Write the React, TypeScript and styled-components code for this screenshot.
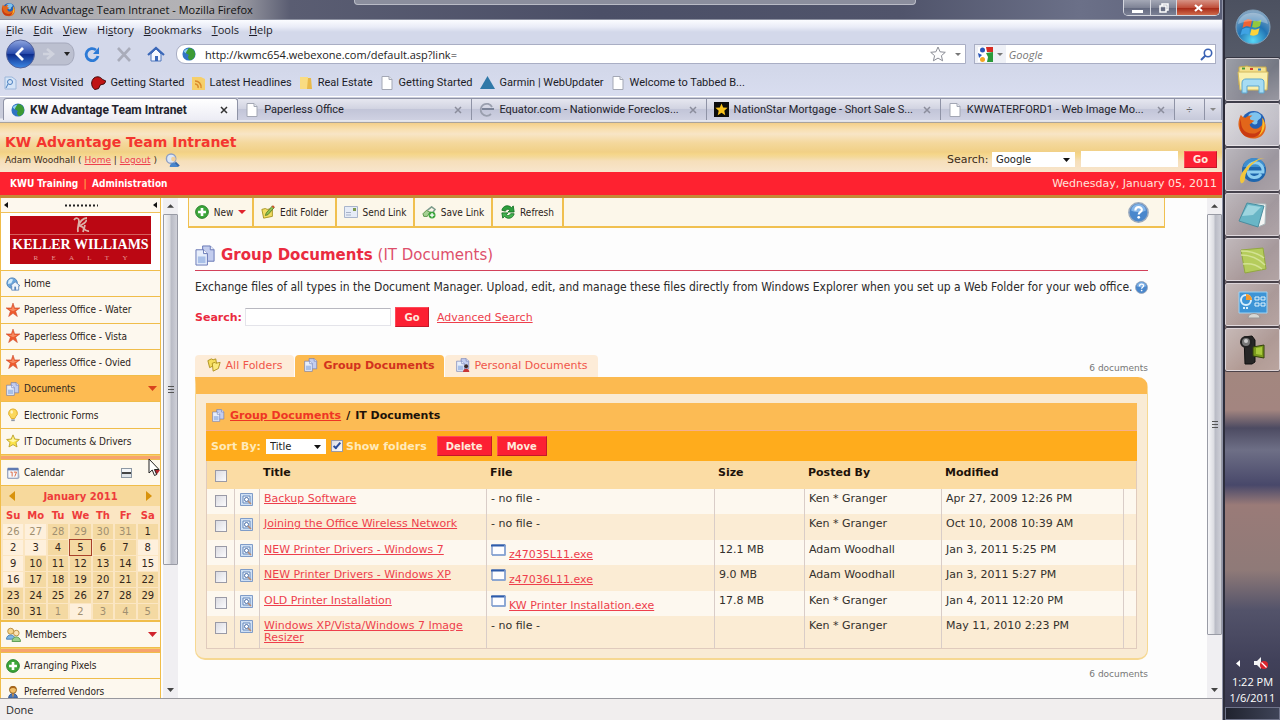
import React from "react";
import styled, { createGlobalStyle, css } from "styled-components";

const verdana = `"DejaVu Sans", Verdana, sans-serif`;
const condensed = `"DejaVu Sans Condensed", "DejaVu Sans", Tahoma, sans-serif`;
const segoe = `Roboto, "Segoe UI", sans-serif`;

const Global = createGlobalStyle`
  *, *::before, *::after { box-sizing: border-box; }
  body { margin: 0; background: #4b4c5f; font-family: ${verdana}; font-size: 11px; color: #222; }
  button, input, select { font-family: inherit; font-size: inherit; margin: 0; padding: 0; border: 0; }
  button { background: none; color: inherit; }
  a { color: #ee3f4c; }
  svg { display: block; flex: none; }
  ul { list-style: none; margin: 0; padding: 0; }
  h1, h2, p { margin: 0; }
`;

/* ---------- desktop ---------- */
const Desktop = styled.div`
  display: grid;
  grid-template-columns: minmax(0, 1fr) 57px;
  height: 100vh;
  overflow: hidden;
`;
const BrowserWindow = styled.div`
  display: flex;
  flex-direction: column;
  min-height: 0;
  border-right: 1px solid #8f93a6;
`;

/* ---------- title bar ---------- */
const TitleBar = styled.header`
  position: relative;
  display: flex;
  align-items: center;
  height: 20px;
  flex: none;
  padding-left: 1px;
  gap: 4px;
  border-bottom: 1px solid #8c90a0;
  background: linear-gradient(90deg, #a9a9ae 0, #b4b3b6 200px, #8d8e99 250px, #5a5d72 290px, #4b4f67 600px, #50546b 900px, #6b7088 1080px, #5c6078 100%);
  color: #111;
  font-family: "Open Sans", sans-serif;
  font-size: 11px;
`;
const BackgroundEdge = styled.div`
  position: absolute;
  top: 0;
  left: 29%;
  width: 46%;
  height: 5px;
  background: #8b8e9d;
  border: 1px solid #b9bbc6;
  border-top: 0;
  border-radius: 0 0 4px 4px;
`;
const WindowButtons = styled.div`
  display: flex;
  align-self: flex-start;
  margin-left: auto;
  margin-right: 2px;
  height: 16px;
  border: 1px solid #d4d6de;
  border-top: 0;
  border-radius: 0 0 5px 5px;
  overflow: hidden;
`;
const WindowButton = styled.button<{ $close?: boolean }>`
  display: grid;
  place-items: center;
  width: ${(p) => (p.$close ? 43 : 26)}px;
  background: ${(p) =>
    p.$close
      ? "linear-gradient(#d79385, #c0503c 50%, #a82a18 55%, #cf6a4b)"
      : "linear-gradient(#a4a8b6, #7f8496 50%, #646a80 55%, #7c8195)"};
  & + & { border-left: 1px solid #d4d6de; }
`;

/* ---------- browser chrome ---------- */
const Chrome = styled.div`
  flex: none;
  font-family: ${segoe};
  color: #1c1c28;
  background: linear-gradient(#fbfcff 0, #e9ecf7 7px, #d3d8ea 12px, #d3d8ea 50px, #dde1f4 100%);
`;
const MenuBar = styled.nav`
  display: flex;
  align-items: center;
  height: 19px;
  padding-left: 6px;
  gap: 10px;
  font-family: "Open Sans", sans-serif;
`;
const MenuItem = styled.button``;
const NavBar = styled.div`
  display: flex;
  align-items: center;
  height: 30px;
  padding: 0 6px 0 5px;
`;
const NavButton = styled.button`
  display: grid;
  place-items: center;
  width: 32px;
  height: 28px;
`;
const Field = styled.div<{ $grow?: boolean }>`
  display: flex;
  align-items: center;
  height: 20px;
  background: #fff;
  border: 1px solid #a9aec4;
  ${(p) =>
    p.$grow
      ? css`flex: 1; border-radius: 9px 0 0 9px; padding: 0 4px 0 5px; margin-left: 4px; gap: 9px;`
      : css`width: 20%; margin-left: 8px; padding-right: 2px;`}
`;
const FieldInput = styled.input`
  flex: 1;
  min-width: 0;
  background: transparent;
  outline: none;
  color: #222;
  font-family: "Open Sans", sans-serif;
  &::placeholder { color: #777; font-style: italic; opacity: 1; }
`;
const EngineButton = styled.button`
  display: flex;
  align-items: center;
  gap: 4px;
  height: 18px;
  width: 31px;
  margin-right: 3px;
  padding-left: 3px;
  background: #eef0f6;
`;
const BookmarkBar = styled.nav`
  display: flex;
  align-items: center;
  height: 27px;
  padding-left: 4px;
  gap: 7px;
`;
const Bookmark = styled.a`
  display: flex;
  align-items: center;
  gap: 5px;
  color: #1c1c28;
  text-decoration: none;
  white-space: nowrap;
`;
const TabStrip = styled.div`
  display: flex;
  align-items: stretch;
  height: 26px;
  padding: 2px 0 2px 3px;
  background: linear-gradient(#fff 0, #fff 1px, #c9ccdb 1px, #c9ccdb 22px, #f0f1f6 23px, #dcdee6 100%);
`;
const Tab = styled.div<{ $active?: boolean }>`
  display: flex;
  align-items: center;
  flex: 1;
  min-width: 0;
  gap: 5px;
  padding: 0 9px 0 7px;
  border: 1px solid #8f93a6;
  border-width: 1px 1px 0 0;
  background: ${(p) =>
    p.$active ? "linear-gradient(#fff, #ececf4)" : "linear-gradient(#e6e7f0, #d2d4e2 45%, #c2c5d8 50%, #cfd1e2)"};
  ${(p) => p.$active && "font-size: 12px; font-weight: 700; border-left-width: 1px; border-radius: 4px 3px 0 0;"}
  color: #23232c;
`;
const TabLabel = styled.span`
  flex: 1;
  white-space: nowrap;
`;
const TabTool = styled.button<{ $narrow?: boolean }>`
  display: grid;
  place-items: center;
  width: ${(p) => (p.$narrow ? 17 : 30)}px;
  border: 1px solid #8f93a6;
  border-width: 1px 1px 0 0;
  background: linear-gradient(#e6e7f0, #c6c9da);
  color: #666;
`;

/* ---------- site header ---------- */
const SiteHeader = styled.header`
  display: flex;
  justify-content: space-between;
  flex: none;
  height: 50px;
  padding: 0 5px 0 5px;
  border-top: 1px solid #a9a39c;
  background: linear-gradient(#f4cf88 0, #f8dfae 6px, #f8e5c6 11px, #f4d89c 20px, #f1d086 29px, #f5d689 31px, #f4d99a 34px, #f6dfba 38px, #f8e5cc 100%);
`;
const Identity = styled.div`
  padding-top: 9px;
`;
const SiteTitle = styled.h1`
  font: 700 14px/20px ${verdana};
  color: #f4362f;
`;
const UserLine = styled.div`
  display: flex;
  align-items: center;
  gap: 8px;
  font: 9px/16px ${verdana};
  color: #3d2c18;
`;
const SiteSearch = styled.form`
  display: flex;
  align-items: center;
  align-self: flex-end;
  height: 18px;
  margin-bottom: 4px;
  color: #3d2c18;
`;
const SelectBox = styled.span<{ $width: number }>`
  position: relative;
  display: inline-block;
  width: ${(p) => p.$width}px;
  height: 15px;
  background: #fff;
  color: #222;
  svg { position: absolute; right: 5px; top: 6px; pointer-events: none; }
`;
const Select = styled.select`
  appearance: none;
  display: block;
  width: 100%;
  height: 15px;
  padding-left: 4px;
  background: transparent;
  font: 10px ${verdana};
  color: #222;
`;
const SearchText = styled.input<{ $bordered?: boolean }>`
  width: ${(p) => (p.$bordered ? 146 : 97)}px;
  height: ${(p) => (p.$bordered ? 18 : 16)}px;
  margin: ${(p) => (p.$bordered ? "0 4px 0 0" : "0 6px")};
  background: #fff;
  border: 1px solid ${(p) => (p.$bordered ? "#e4e4ea" : "#fff")};
  ${(p) => p.$bordered && "border-top-color: #b8b8c0;"}
`;
const RedButton = styled.button<{ $width: number; $tall?: boolean }>`
  width: ${(p) => p.$width}px;
  height: ${(p) => (p.$tall ? 20 : 17)}px;
  background: #fc2033;
  border: 1px solid #fd4a58;
  border-right-color: #c4182a;
  border-bottom-color: #c4182a;
  color: #ffe9dc;
  font: 700 10px ${verdana};
`;
const RedBar = styled.nav`
  display: flex;
  align-items: center;
  gap: 5px;
  flex: none;
  height: 26px;
  padding: 0 5px 1px 10px;
  background: #fe2230;
  border-bottom: 3px solid #c58a36;
  color: #ffb04a;
`;
const RedBarLink = styled.a`
  color: #fff;
  font: 700 10px ${condensed};
  text-decoration: none;
`;
const Today = styled.span`
  margin-left: auto;
  color: #ffe4dc;
`;

/* ---------- page body ---------- */
const Body = styled.div`
  display: flex;
  flex: 1;
  min-height: 0;
  background: #fdfdfd;
`;
const Sidebar = styled.aside`
  position: relative;
  width: 161px;
  margin-right: 2px;
  flex: none;
  overflow: hidden;
  border: 1px solid #f0bd4a;
  border-width: 0 1px;
  background: #fdf8ee;
  font: 10px ${condensed};
`;
const Collapse = styled.div`
  display: flex;
  align-items: center;
  justify-content: space-between;
  height: 15px;
  padding: 0 3px;
  border-bottom: 1px solid #f0c05a;
`;
const LogoArea = styled.div`
  height: 58px;
  padding: 3px 9px;
  background: #fff;
  border-bottom: 1px solid #f0bd4a;
`;
const Logo = styled.div`
  display: flex;
  flex-direction: column;
  align-items: center;
  height: 48px;
  background: #bb0713;
  color: #fff;
`;
const LogoMark = styled.div`
  display: flex;
  justify-content: center;
  width: 100%;
  height: 19px;
  border-bottom: 1px solid #d5625f;
`;
const LogoName = styled.div`
  font: 700 14px/20px "Liberation Serif", serif;
  white-space: nowrap;
`;
const LogoSub = styled.div`
  display: flex;
  justify-content: space-between;
  width: 94px;
  font: 7px/7px "Liberation Serif", serif;
  color: #e79a94;
`;
const SideList = styled.ul`
  display: flex;
  flex-direction: column;
  height: 184px;
`;
const SideItem = styled.li<{ $selected?: boolean }>`
  flex: 1;
  display: flex;
  align-items: center;
  padding: 0 3px 0 5px;
  border-bottom: 1px solid #f0bd4a;
  background: ${(p) => (p.$selected ? "#fdbb52" : "#fdf8ee")};
`;
const SideLink = styled.a`
  display: flex;
  align-items: center;
  gap: 4px;
  flex: 1;
  min-width: 0;
  color: #2c2420;
  text-decoration: none;
  white-space: nowrap;
`;
const Divider = styled.div`
  height: 5px;
  background: linear-gradient(#f6cf6a 1px, #f7a36d 1px);
  border-bottom: 1px solid #f0bd4a;
`;
const SideHeading = styled.div`
  position: relative;
  display: flex;
  align-items: center;
  height: 26px;
  padding: 0 3px 0 5px;
  border-bottom: 1px solid #f0bd4a;
`;
const MinusBox = styled.button`
  width: 11px;
  height: 10px;
  margin-right: 25px;
  border: 1px solid #8d98a4;
  background: linear-gradient(#f4f6f8 3px, #444 3px, #444 5px, #dfe4e8 5px);
`;
const Pointer = styled.div`
  position: absolute;
  right: 0;
  top: -2px;
`;
const Month = styled.div`
  display: flex;
  align-items: center;
  justify-content: space-between;
  height: 20px;
  padding: 0 8px;
  background: #f7d99c;
  color: #ee3b3b;
  font: 700 10px ${verdana};
`;
const CalendarTable = styled.table`
  width: 100%;
  table-layout: fixed;
  border-collapse: separate;
  border-spacing: 2px 1px;
  background: #fbe6c3;
  text-align: center;
  font: 10px ${verdana};
  border-bottom: 2px solid #f0bd4a;
  th { padding: 0; height: 16px; color: #ee3b3b; font-size: 10px; }
`;
const Day = styled.td<{ $light?: boolean; $muted?: boolean; $today?: boolean }>`
  padding: 0;
  height: 15px;
  background: ${(p) => (p.$light ? "#fef0dc" : "#f4d9a2")};
  color: ${(p) => (p.$muted ? "#a08f70" : "#33261a")};
  outline: ${(p) => (p.$today ? "1px solid #a8402a" : "none")};
`;

const ScrollTrack = styled.div`
  display: flex;
  flex-direction: column;
  width: 15px;
  flex: none;
  background: #f0eff2;
`;
const ScrollArrow = styled.button`
  display: grid;
  place-items: center;
  height: 16px;
  flex: none;
`;
const ScrollRun = styled.div`
  flex: 1;
  min-height: 0;
`;
const ScrollThumb = styled.div<{ $size: number }>`
  display: grid;
  place-items: center;
  height: ${(p) => p.$size}%;
  border: 1px solid #999ba5;
  border-radius: 1px;
  background: linear-gradient(90deg, #f6f6f8, #dcdde2 45%, #b9bbc5 55%, #cfd0d8);
`;

const Main = styled.main`
  flex: 1;
  min-width: 0;
  padding: 0 42px 0 10px;
`;
const Toolbar = styled.div`
  display: flex;
  height: 30px;
  background: #fcf7ea;
  border: 1px solid #f0c050;
  border-top: 0;
  border-bottom-width: 2px;
  font: 10px ${condensed};
`;
const ToolButton = styled.button<{ $width: number }>`
  display: flex;
  align-items: center;
  justify-content: center;
  gap: 5px;
  width: ${(p) => p.$width}px;
  border-right: 2px solid #f0c050;
  color: #2c2420;
  white-space: nowrap;
`;
const HelpButton = styled.button`
  margin-left: auto;
  margin-right: 15px;
`;
const Content = styled.div`
  padding: 14px 17px 0 7px;
`;
const PageTitle = styled.h2`
  display: flex;
  align-items: center;
  gap: 5px;
  height: 29px;
  padding-bottom: 2px;
  border-bottom: 1px solid #d3415a;
  font: 700 15px ${verdana};
  color: #ea2b40;
  span { font-weight: 400; color: #dd4f6b; }
`;
const Intro = styled.p`
  display: flex;
  align-items: center;
  justify-content: space-between;
  height: 32px;
  font: 12px ${condensed};
  color: #2a2a2a;
  white-space: nowrap;
`;
const DocSearch = styled.form`
  display: flex;
  align-items: center;
  height: 22px;
  margin-top: 3px;
  label { color: #ea2b40; font-weight: 700; width: 50px; }
  a { margin-left: 8px; }
`;
const TabRow = styled.div`
  display: flex;
  align-items: flex-end;
  gap: 1px;
  margin-top: 27px;
`;
const DocTab = styled.a<{ $active?: boolean; $width: number }>`
  display: flex;
  align-items: center;
  justify-content: center;
  gap: 5px;
  width: ${(p) => p.$width}px;
  height: 22px;
  padding-bottom: 2px;
  border-radius: 4px 4px 0 0;
  background: ${(p) => (p.$active ? "#fcba50" : "#fdecd8")};
  color: ${(p) => (p.$active ? "#d2321e" : "#f0564a")};
  font-weight: ${(p) => (p.$active ? 700 : 400)};
  text-decoration: none;
`;
const Count = styled.span`
  margin-left: auto;
  padding-bottom: 4px;
  font-size: 9px;
  color: #777;
`;
const CountBelow = styled.div`
  margin-top: 9px;
  text-align: right;
  font-size: 9px;
  color: #777;
`;
const Panel = styled.section`
  border: 1px solid #f6d892;
  border-top: 17px solid #fcba50;
  border-bottom: 2px solid #f6d892;
  border-radius: 0 10px 10px 10px;
  padding: 9px 10px;
  background: #f9ebd5;
`;
const Crumbs = styled.nav`
  display: flex;
  align-items: center;
  gap: 5px;
  height: 27px;
  padding: 0 0 2px 6px;
  background: #fcbb54;
  font-weight: 700;
  color: #1d120a;
  a { color: #ee3524; }
`;
const SortBar = styled.div`
  display: flex;
  align-items: center;
  height: 31px;
  padding-left: 5px;
  border-top: 1px solid #f5b08c;
  background: #ffac1c;
  color: #ffeaba;
  font-weight: 700;
  button + button { margin-left: 5px; }
  button { margin-left: 10px; }
`;
const SortLabel = styled.label`
  width: 55px;
`;
const Check = styled.input`
  appearance: none;
  display: block;
  width: 12px;
  height: 12px;
  border: 1px solid #9a9aa6;
  background: linear-gradient(135deg, #dcdce2, #fbfbfd);
  &:checked::after {
    content: "";
    display: block;
    width: 4px;
    height: 8px;
    margin: 0 0 0 3px;
    border: solid #2a4d9c;
    border-width: 0 2px 2px 0;
    transform: rotate(40deg);
  }
`;
const FolderOption = styled.span`
  display: flex;
  align-items: center;
  gap: 3px;
  margin-left: 5px;
`;
const DocTable = styled.table`
  width: 100%;
  table-layout: fixed;
  border-collapse: separate;
  border-spacing: 0;
  border: 1px solid #e0cbbd;
  border-top: 0;
  th {
    height: 28px;
    padding: 4px 4px 0;
    text-align: left;
    vertical-align: top;
    line-height: 16px;
    background: #fbdca4;
    color: #1d120a;
  }
  td {
    height: 25px;
    padding: 4px 4px 0;
    vertical-align: top;
    line-height: 12px;
    background: #fdf8ef;
    border-left: 1px solid #d9cdc8;
    color: #33302c;
  }
  td:first-child { border-left: 0; }
  tbody tr:nth-child(even) td { height: 26px; background: #fbecd4; }
  tbody tr:last-child td { height: 32px; background: #fbecd4; }
  td input { margin: 2px 0 0 4px; }
  th input { margin: 5px 0 0 4px; }
  td:nth-child(2) { padding-left: 5px; }
`;
const FileCell = styled.span`
  display: flex;
  gap: 3px;
  a { padding-top: 5px; line-height: 12px; }
`;

const StatusBar = styled.footer`
  display: flex;
  align-items: center;
  flex: none;
  height: 22px;
  padding-left: 6px;
  border-top: 1px solid #98989e;
  background: #f1eeee;
  font: 11px "Open Sans", sans-serif;
  color: #2a2a2a;
`;

/* ---------- taskbar ---------- */
const Taskbar = styled.aside`
  display: flex;
  flex-direction: column;
  border-left: 2px solid #2c2d3b;
  background: linear-gradient(#4c5160 0, #555a68 57px, #85828e 120px, #94868b 230px, #a3877f 371px, #a38580 410px, #4d4b62 428px, #6e6f86 450px, #48486a 485px, #9a7b78 505px, #8f7a78 570px, #53536a 610px, #41415a 660px, #37374b 100%);
  color: #fff;
`;
const StartButton = styled.button`
  display: grid;
  place-items: center;
  height: 58px;
  padding-bottom: 4px;
`;
const TaskButton = styled.button<{ $active?: boolean }>`
  display: grid;
  place-items: center;
  height: 43px;
  margin-bottom: 2px;
  border: 1px solid rgba(235, 230, 235, 0.75);
  border-radius: 2px;
  outline: 1px solid rgba(40, 38, 50, 0.7);
  background: ${(p) =>
    p.$active
      ? "linear-gradient(135deg, rgba(255,255,255,.75), rgba(215,212,222,.6))"
      : "linear-gradient(135deg, rgba(255,255,255,.42), rgba(255,255,255,.16) 60%, rgba(255,255,255,.25))"};
`;
const Tray = styled.div`
  display: flex;
  align-items: center;
  justify-content: space-around;
  margin-top: auto;
  height: 20px;
  padding: 0 4px;
`;
const Clock = styled.div`
  padding: 1px 0;
  font: 11px/16px "Open Sans", sans-serif;
  text-align: center;
`;
const ShowDesktop = styled.button`
  height: 13px;
  border: 1px solid #70748a;
  background: linear-gradient(90deg, #20232f, #3f4458);
`;

/* ---------- icons ---------- */
type IconProps = { size?: number };

const Down = ({ color = "#111", w = 7 }: { color?: string; w?: number }) => (
  <svg width={w} height={Math.ceil(w / 2)} viewBox="0 0 8 4" preserveAspectRatio="none"><path d="M0 0h8L4 4z" fill={color} /></svg>
);
const Side = ({ color = "#111", flip, w = 4, h = 6 }: { color?: string; flip?: boolean; w?: number; h?: number }) => (
  <svg width={w} height={h} viewBox="0 0 4 8" preserveAspectRatio="none"><path d={flip ? "M0 0v8l4-4z" : "M4 0v8L0 4z"} fill={color} /></svg>
);
const Firefox = ({ size = 16 }: IconProps) => (
  <svg width={size} height={size} viewBox="0 0 32 32">
    <circle cx="17" cy="14" r="12" fill="#2460b4" />
    <path d="M12 6c4-4 11-3 13 1 0 4-3 3-4 6 1 3-3 4-5 2s-5-3-4-9z" fill="#7fc4ee" />
    <path d="M4 6c1 2 3 3 5 3 2-2 4-3 7-2-3 1-3 3-2 4l4 1-5 4c1 4 6 6 10 3 4-2 4-6 3-10 5 6 5 14-1 19-6 4-15 3-20-3C0 19 1 12 4 6z" fill="#e2661a" />
    <path d="M4 10c0 7 1 11 6 14 6 3 12 1 16-4-2 7-8 11-15 9S1 19 4 10z" fill="#c93a12" />
    <path d="M26 9c5 7 2 15-4 19 4-5 5-12 4-19z" fill="#fbc02a" />
  </svg>
);
const Globe = ({ size = 14 }: IconProps) => (
  <svg width={size} height={size} viewBox="0 0 16 16">
    <circle cx="8" cy="8" r="7.5" fill="#2f74c4" />
    <path d="M8 1c4 0 7 3 7 7s-3 7-6 7c-2-2-3-4-1-6-3-1-5-3-3-5z" fill="#3c9a35" />
    <path d="M2 5c1-2 3-3 5-3L4 7z" fill="#8fd0f2" />
  </svg>
);
const PageIcon = ({ size = 14 }: IconProps) => (
  <svg width={size} height={size} viewBox="0 0 14 14"><path d="M2 .5h7l3 3v10H2z" fill="#fff" stroke="#a3a7b4" /><path d="M9 .5v3h3" fill="#e6e8ee" stroke="#a3a7b4" /></svg>
);
const StarShape = ({ size = 14, fill, stroke, inner, sharp }: { size?: number; fill: string; stroke: string; inner?: string; sharp?: boolean }) => (
  <svg width={size} height={size} viewBox="0 0 16 16">
    <path
      d={sharp ? "M8 0l1.900 5.600h6L11 9.300l2 6.200-5-3.700-5 3.700 2-6.200L.1 5.600h6z" : "M8 1l2.1 4.8 5.2.5-3.900 3.400 1.200 5.100L8 12.100l-4.600 2.700 1.200-5.100L.7 6.300l5.200-.5z"}
      fill={fill}
      stroke={stroke}
      strokeWidth={sharp ? 0.6 : 1}
      strokeLinejoin="round"
    />
    {inner && <path d="M8 3l1.300 3.600 3.700.2-5 2.700-5-2.700 3.700-.2z" fill={inner} />}
  </svg>
);
const Docs = ({ size = 14, person }: IconProps & { person?: boolean }) => (
  <svg width={size} height={size} viewBox="0 0 22 22">
    <path d="M8 1h8l4 4v12H8z" fill="#c3cdee" stroke="#6677b4" />
    <path d="M16 1v4h4" fill="#eef1fb" stroke="#6677b4" />
    <path d="M1 5h8l4 4v12H1z" fill="#e7eefb" stroke="#6677b4" />
    <path d="M9 5v4h4" fill="#fff" stroke="#6677b4" />
    <path d="M3 12h8v7H3z" fill="#a9c0e8" />
    {person && <g><circle cx="16" cy="13" r="3" fill="#3a2a28" /><path d="M11 22c0-7 10-7 10 0z" fill="#c93434" /></g>}
  </svg>
);
const Plus = ({ size = 14 }: IconProps) => (
  <svg width={size} height={size} viewBox="0 0 16 16">
    <circle cx="8" cy="8" r="7.3" fill="#3da63a" stroke="#1f7a24" />
    <path d="M6.5 3.5h3v3h3v3h-3v3h-3v-3h-3v-3h3z" fill="#fff" />
  </svg>
);
const Help = ({ size = 20 }: IconProps) => (
  <svg width={size} height={size} viewBox="0 0 20 20">
    <circle cx="10" cy="10" r="9.2" fill="#4a87cc" stroke="#9aa9bd" strokeWidth="1.4" />
    <path d="M3 8a7 6 0 0 1 14 0c-4 2-10 2-14 0z" fill="#86b6e8" />
    <path d="M7 8c0-4 6.200-4 6.200-.6 0 2.300-3 2.300-3 4.600" fill="none" stroke="#fff" strokeWidth="2" />
    <circle cx="10.200" cy="14.600" r="1.300" fill="#fff" />
  </svg>
);
const HomeSide = () => (
  <svg width="14" height="14" viewBox="0 0 16 16">
    <circle cx="7" cy="7" r="6" fill="#6aa6dc" stroke="#4a7fb8" />
    <path d="M3 4c2-2 4-2 5-1L6 7 2 8z" fill="#d6ecfa" />
    <path d="M5 10l5.500-4.500L16 10h-1.500v5h-8v-5z" fill="#eef4fb" stroke="#5b86bb" />
    <path d="M9.500 11h2v4h-2z" fill="#5b86bb" />
  </svg>
);
const Bulb = () => (
  <svg width="14" height="14" viewBox="0 0 16 16">
    <path d="M8 1a5 5 0 0 0-3 9l1 2h4l1-2a5 5 0 0 0-3-9z" fill="#fbd75a" stroke="#d9a520" />
    <path d="M6 13h4v2H6z" fill="#8d96a6" /><ellipse cx="6.500" cy="4.500" rx="1.500" ry="2" fill="#fff5c8" />
  </svg>
);
const CalIcon = () => (
  <svg width="14" height="14" viewBox="0 0 16 16">
    <path d="M2 3h12v11H2z" fill="#f5f7fb" stroke="#6d80a8" /><path d="M2 2h12v3H2z" fill="#5f7ab2" />
    <path d="M5 7h2v5M9 7h3l-2 5" fill="none" stroke="#d85a30" /><path d="M14 5l1 8-2 2" fill="none" stroke="#a9b4c8" />
  </svg>
);
const People = () => (
  <svg width="15" height="15" viewBox="0 0 16 16">
    <circle cx="5" cy="4.500" r="3.200" fill="#f6d58a" stroke="#b98c3c" /><path d="M.5 13c0-6 9-6 9 0z" fill="#7db5e4" stroke="#4a80b4" />
    <circle cx="11" cy="6.500" r="3" fill="#fbe3b4" stroke="#b98c3c" /><path d="M6.500 15.500c0-6.500 9-6.500 9 0z" fill="#9ad08a" stroke="#5a9a50" />
  </svg>
);
const Person = () => (
  <svg width="14" height="14" viewBox="0 0 16 16">
    <path d="M3 15c0-7 10-7 10 0z" fill="#4474b8" stroke="#2c4f88" /><circle cx="8" cy="5.500" r="4" fill="#f3c069" stroke="#8a5a1c" />
    <path d="M4 5c0-5 8-5 8 0-3-2-5-2-8 0z" fill="#a8661c" /><path d="M7 10h2l-1 5z" fill="#f39a2a" />
  </svg>
);
const Preview = () => (
  <svg width="13" height="13" viewBox="0 0 13 13">
    <path d="M.5.5h12v12H.5z" fill="#cfe0f4" stroke="#7f9cc8" /><path d="M3 3h7v7H3z" fill="#eef5fc" stroke="#6488bc" />
    <circle cx="6.500" cy="6.500" r="2" fill="#fff" stroke="#4a6ea8" /><path d="M8 8l3 3" stroke="#b98b72" strokeWidth="1.500" />
  </svg>
);
const Exe = () => (
  <svg width="15" height="12" viewBox="0 0 15 12"><path d="M1 1h13v10H1z" fill="#fdfdff" stroke="#4a72b8" /><path d="M0 1.500h14.500" stroke="#2f5cab" strokeWidth="2" /><path d="M14 1v10H1" fill="none" stroke="#86a4d4" strokeWidth="1.500" /></svg>
);
const UserSearch = () => (
  <svg width="15" height="15" viewBox="0 0 16 16">
    <circle cx="6.500" cy="6" r="5" fill="#dce8f8" stroke="#8f9fc4" strokeWidth="1.500" /><circle cx="9" cy="6.500" r="2.500" fill="#f3cf98" />
    <path d="M5 15c0-6 9-6 9 0z" fill="#4a86cc" /><path d="M11 10l4 4" stroke="#3568ac" strokeWidth="2" />
  </svg>
);
const Folders = () => (
  <svg width="14" height="14" viewBox="0 0 16 16">
    <path d="M1 3l4-2 2 1 3-1 1 6-8 4z" fill="#f6dd5c" stroke="#a98c18" /><path d="M6 6l3-1 1 1 5-1-2 7-6 3z" fill="#fbe97c" stroke="#a98c18" />
  </svg>
);
const EditIcon = () => (
  <svg width="14" height="14" viewBox="0 0 16 16">
    <path d="M1 5l4-1 2 1 6-1v9L3 15z" fill="#f2dc62" stroke="#a2901e" /><path d="M5 12l1-3 7-8 2 2-7 8z" fill="#8cc152" stroke="#5a7f2a" /><path d="M13 1l2 2" stroke="#d0502c" strokeWidth="2" />
  </svg>
);
const MailIcon = () => (
  <svg width="14" height="12" viewBox="0 0 14 12"><path d="M.5.500h13v11H.5z" fill="#e6ecf7" stroke="#a9b5cc" /><path d="M9 2h3v3H9z" fill="#7f9a4e" /><path d="M2 6.500h5M2 9h5" stroke="#a7b2c8" /></svg>
);
const SaveLinkIcon = () => (
  <svg width="14" height="13" viewBox="0 0 16 15"><path d="M1 9l4-4 4 2-3 5H2z" fill="#a6d194" stroke="#4c8a3c" /><path d="M6 5l5-4 4 3-3 4-3-1" fill="none" stroke="#7c9c8c" strokeWidth="1.800" /><circle cx="11.500" cy="10.500" r="4" fill="#3aa43a" /><path d="M11.500 8v5M9 10.500h5" stroke="#fff" strokeWidth="1.500" /></svg>
);
const RefreshIcon = () => (
  <svg width="14" height="14" viewBox="0 0 16 16"><path d="M1 6c1-5 7-7 11-3l2-2 1 7H8l2-2c-2-2-4-1-5 1z" fill="#2c9e3c" stroke="#157026" /><path d="M15 10c-1 5-7 7-11 3l-2 2-1-6h7l-2 2c2 2 4 1 5-1z" fill="#46b450" stroke="#157026" /></svg>
);
const WinOrb = () => (
  <svg width="36" height="36" viewBox="0 0 36 36">
    <defs><radialGradient id="orb" cx=".5" cy=".9" r=".9"><stop offset="0" stopColor="#58d8f6" /><stop offset=".5" stopColor="#2274b4" /><stop offset="1" stopColor="#8ba9c4" /></radialGradient></defs>
    <circle cx="18" cy="18" r="17" fill="url(#orb)" stroke="#7e9fba" />
    <path d="M9 12c3-2 5-2 8-1l-1.500 7c-3-1-5-1-8 1z" fill="#ef6334" /><path d="M18.500 11.500c3 1 5 1 8-1L25 17c-3 2-5 2-8 1z" fill="#93c83e" />
    <path d="M7 20.500c3-2 5-2 8-1l-1.500 6c-3-1-5-1-8 1z" fill="#3fa3e4" /><path d="M16.500 20c3 1 5 1 8-1L23 25c-3 2-5 2-8 1z" fill="#fbd23c" />
    <path d="M3 15C5 0 31 0 33 15c-9-4-21-4-30 0z" fill="#fff" opacity=".3" />
  </svg>
);
const Explorer = () => (
  <svg width="34" height="32" viewBox="0 0 34 32">
    <path d="M3 3l8-1 4 1 15 0 1 18H3z" fill="#f3df8c" stroke="#c7ab4c" /><path d="M2 8h30l-1 18H4z" fill="#faefac" stroke="#d2b85c" />
    <path d="M6 4.500h3" stroke="#4a9a3a" strokeWidth="2" /><path d="M14 5h3" stroke="#d0402c" strokeWidth="2" /><path d="M22 5.500h3" stroke="#3a7ac0" strokeWidth="2" />
    <path d="M6 19c0-3 2-4 4-4h14c3 0 4 1 4 4v10h-5v-7H11v7H6z" fill="#a6dcf3" stroke="#5ca7cf" />
  </svg>
);
const IE = () => (
  <svg width="32" height="32" viewBox="0 0 32 32">
    <circle cx="17" cy="16" r="12" fill="#1f66ae" />
    <path d="M6 13C8 1 26 1 28 13z" fill="#4d9fdb" opacity=".7" />
    <path d="M24 20c-3 5-12 5-13-2h15c1-12-15-12-16-2" fill="none" stroke="#8ccdf0" strokeWidth="3" />
    <path d="M4 29C-1 22 14 4 28 4c-9 1-19 10-20 20 0 3-2 6-4 5z" fill="#f2c63c" />
  </svg>
);
const NotePad = () => (
  <svg width="30" height="28" viewBox="0 0 30 28"><path d="M9 2l19 1-1 20-7 3z" fill="#f3f5f4" stroke="#a9b7ba" /><path d="M9 2l17 3-6 21L1 20z" fill="#69b6c6" stroke="#4a8c9e" /><path d="M10 4l13 2-8 8-11 1z" fill="#b4e2ea" opacity=".7" /></svg>
);
const GreenNote = () => (
  <svg width="28" height="28" viewBox="0 0 28 28"><path d="M2 4l22-2 3 21-21 4z" fill="#b5cc5c" stroke="#92a840" /><path d="M2 9c9 0 18 4 24 10M2 5c10 0 18 3 23 7M4 18c7-1 14 1 19 5" stroke="#d3e293" strokeWidth="1.500" fill="none" /></svg>
);
const ControlPanel = () => (
  <svg width="32" height="30" viewBox="0 0 32 30"><path d="M2 2h28v21H2z" fill="#3d94d6" stroke="#9fd2f2" /><circle cx="9" cy="10" r="5" fill="none" stroke="#d9eefc" strokeWidth="2" /><path d="M9 10V4a6 6 0 0 1 6 6z" fill="#f39a2c" /><path d="M18 7h4v3h-4zM24 7h4v3h-4zM18 13h4v3h-4zM24 13h4v3h-4z" fill="none" stroke="#e0f2fc" /><path d="M6 18h6" stroke="#d9eefc" strokeWidth="2" strokeDasharray="2 1" /><path d="M11 28c0-6 12-6 12 0z" fill="#d8d8d4" stroke="#999" /></svg>
);
const Camcorder = () => (
  <svg width="28" height="30" viewBox="0 0 28 30"><path d="M5 2l8-1 3 4v22l-3 2H6z" fill="#262626" stroke="#111" /><circle cx="7" cy="7" r="5" fill="#777" stroke="#222" strokeWidth="2" /><circle cx="7" cy="6" r="2" fill="#ccc" /><path d="M14 12l11-2v13l-11-2z" fill="#7a9a1c" stroke="#34420c" /><path d="M17 13l6-1v8l-6-1z" fill="#a9c93c" /></svg>
);

const bookmarks: [string, React.ReactNode][] = [
  ["Most Visited", <svg key="a" width="13" height="14" viewBox="0 0 13 14"><path d="M1 1h7l4 3v9H1z" fill="#d5e4f7" stroke="#9cb7da" /><circle cx="6" cy="6" r="2.500" fill="none" stroke="#4a7fc0" /><path d="M4 8l-2 4" stroke="#4a7fc0" /></svg>],
  ["Getting Started", <svg key="b" width="15" height="14" viewBox="0 0 16 14"><path d="M2 3c3-4 8-3 10 0l4 2-2 3-4 1-2 4-4 1C0 11 0 6 2 3z" fill="#c01414" stroke="#3a0a0a" /></svg>],
  ["Latest Headlines", <svg key="c" width="13" height="14" viewBox="0 0 13 14"><path d="M0 1h9l4 2v11H0z" fill="#f6cf6a" /><path d="M3 8a3 3 0 0 1 3 4M3 5a6 6 0 0 1 6 7" stroke="#d9892a" strokeWidth="1.500" fill="none" /></svg>],
  ["Real Estate", <svg key="d" width="14" height="14" viewBox="0 0 14 14"><path d="M1 1h8v12H1z" fill="#f9dc82" /><path d="M9 2h3l1 11H8z" fill="#e9b94a" /></svg>],
  ["Getting Started", <PageIcon key="e" />],
  ["Garmin | WebUpdater", <svg key="f" width="15" height="14" viewBox="0 0 15 14"><path d="M7.500 0L15 13H0z" fill="#2f78a8" /></svg>],
  ["Welcome to Tabbed B...", <PageIcon key="g" />],
];

const redStar = <StarShape sharp fill="#ee5a2c" stroke="#c8472a" inner="#f78c62" />;
const sideItems: [string, React.ReactNode][] = [
  ["Home", <HomeSide key="h" />],
  ["Paperless Office - Water", redStar],
  ["Paperless Office - Vista", redStar],
  ["Paperless Office - Ovied", redStar],
  ["Documents", <Docs key="4" />],
  ["Electronic Forms", <Bulb key="5" />],
  ["IT Documents & Drivers", <StarShape key="6" fill="#fbe34a" stroke="#b9a02c" inner="#fff6a8" />],
];

const weeks = [
  [26, 27, 28, 29, 30, 31, 1],
  [2, 3, 4, 5, 6, 7, 8],
  [9, 10, 11, 12, 13, 14, 15],
  [16, 17, 18, 19, 20, 21, 22],
  [23, 24, 25, 26, 27, 28, 29],
  [30, 31, 1, 2, 3, 4, 5],
];
const lightDays = new Set(["0-0", "0-1", "1-0", "1-1", "1-6", "2-0", "2-6", "3-0", "5-3"]);
const isMuted = (w: number, d: number) => (w === 0 && d < 6) || (w === 5 && d > 1);

const documents: [string, string, string, string, string][] = [
  ["Backup Software", "", "", "Ken * Granger", "Apr 27, 2009 12:26 PM"],
  ["Joining the Office Wireless Network", "", "", "Ken * Granger", "Oct 10, 2008 10:39 AM"],
  ["NEW Printer Drivers - Windows 7", "z47035L11.exe", "12.1 MB", "Adam Woodhall", "Jan 3, 2011 5:25 PM"],
  ["NEW Printer Drivers - Windows XP", "z47036L11.exe", "9.0 MB", "Adam Woodhall", "Jan 3, 2011 5:27 PM"],
  ["OLD Printer Installation", "KW Printer Installation.exe", "17.8 MB", "Ken * Granger", "Jan 4, 2011 12:20 PM"],
  ["Windows XP/Vista/Windows 7 Image Resizer", "", "", "Ken * Granger", "May 11, 2010 2:23 PM"],
];

const Scrollbar = ({ size }: { size: number }) => (
  <ScrollTrack>
    <ScrollArrow aria-label="Scroll up"><svg width="7" height="4" viewBox="0 0 8 4"><path d="M0 4h8L4 0z" fill="#444" /></svg></ScrollArrow>
    <ScrollRun>
      <ScrollThumb $size={size}><svg width="6" height="7" viewBox="0 0 6 7"><path d="M0 .5h6M0 3.500h6M0 6.500h6" stroke="#555" /></svg></ScrollThumb>
    </ScrollRun>
    <ScrollArrow aria-label="Scroll down"><Down color="#444" /></ScrollArrow>
  </ScrollTrack>
);

const BrowserTab = ({ icon, label, active }: { icon: React.ReactNode; label: string; active?: boolean }) => (
  <Tab $active={active}>
    {icon}
    <TabLabel>{label}</TabLabel>
    <button aria-label={`Close ${label}`}>
      <svg width="8" height="8" viewBox="0 0 8 8"><path d="M1 1l6 6M7 1L1 7" stroke={active ? "#333" : "#8b8d9c"} strokeWidth="1.500" /></svg>
    </button>
  </Tab>
);

export default function App() {
  return (
    <Desktop>
      <Global />
      <BrowserWindow>
        <TitleBar>
          <BackgroundEdge />
          <Firefox size={15} />
          <span>KW Advantage Team Intranet - Mozilla Firefox</span>
          <WindowButtons>
            <WindowButton aria-label="Minimize"><svg width="11" height="10" viewBox="0 0 11 10"><path d="M0 7h11v3H0z" fill="#fff" /></svg></WindowButton>
            <WindowButton aria-label="Restore"><svg width="10" height="10" viewBox="0 0 10 10"><path d="M3 3V1h6v6H7M1 3h6v6H1z" fill="none" stroke="#fff" strokeWidth="1.500" /></svg></WindowButton>
            <WindowButton $close aria-label="Close"><svg width="9" height="8" viewBox="0 0 9 8"><path d="M1 1l7 6M8 1L1 7" stroke="#fff" strokeWidth="2.200" /></svg></WindowButton>
          </WindowButtons>
        </TitleBar>

        <Chrome>
          <MenuBar>
            <MenuItem><u>F</u>ile</MenuItem>
            <MenuItem><u>E</u>dit</MenuItem>
            <MenuItem><u>V</u>iew</MenuItem>
            <MenuItem>Hi<u>s</u>tory</MenuItem>
            <MenuItem><u>B</u>ookmarks</MenuItem>
            <MenuItem><u>T</u>ools</MenuItem>
            <MenuItem><u>H</u>elp</MenuItem>
          </MenuBar>
          <NavBar>
            <button aria-label="Back and forward">
              <svg width="71" height="30" viewBox="0 0 71 30">
                <defs><linearGradient id="back" x1="0" y1="0" x2="0" y2="1"><stop offset="0" stopColor="#8fa6e0" /><stop offset=".48" stopColor="#2a4dae" /><stop offset=".52" stopColor="#0d2c8c" /><stop offset="1" stopColor="#3d8ae6" /></linearGradient></defs>
                <path d="M14 4h46c12 0 12 22 0 22H14z" fill="#bcc0d0" stroke="#a5a9bc" />
                <circle cx="15.500" cy="15" r="14" fill="url(#back)" stroke="#53629a" />
                <path d="M18 9l-6 6 6 6" fill="none" stroke="#fff" strokeWidth="2.800" />
                <path d="M42 10l6 5-6 5M38 15h9" fill="none" stroke="#d0d3de" strokeWidth="2.600" />
                <path d="M59 13h6l-3 4z" fill="#222" />
              </svg>
            </button>
            <NavButton aria-label="Reload"><svg width="17" height="17" viewBox="0 0 17 17"><path d="M14 10a6 6 0 1 1-2-6" fill="none" stroke="#2c7ad6" strokeWidth="2.800" /><path d="M15 1v7H9z" fill="#2c7ad6" /></svg></NavButton>
            <NavButton aria-label="Stop"><svg width="16" height="15" viewBox="0 0 16 15"><path d="M2 1l12 13M14 1L2 14" stroke="#a9acba" strokeWidth="2.600" /></svg></NavButton>
            <NavButton aria-label="Home"><svg width="18" height="16" viewBox="0 0 18 16"><path d="M4 8v7h10V8L9 3z" fill="#f4f7fd" stroke="#4c74bc" /><path d="M1 9l8-7 8 7" fill="none" stroke="#3a67b8" strokeWidth="2.200" /><path d="M8 10h3v5H8z" fill="#3a67b8" /></svg></NavButton>
            <Field $grow>
              <Globe />
              <FieldInput aria-label="Address" defaultValue="http://kwmc654.webexone.com/default.asp?link=" />
              <StarShape size={16} fill="#fdfdfd" stroke="#8b8d96" />
              <Down color="#777" w={6} />
            </Field>
            <Field>
              <EngineButton aria-label="Search engine">
                <svg width="15" height="15" viewBox="0 0 15 15"><path d="M0 0h15v15H0z" fill="#fff" /><path d="M8 0h7v5H9z" fill="#d82b22" /><path d="M8 6l7-1v10H9l1-5z" fill="#2a9a3a" /><circle cx="4.500" cy="3" r="2.500" fill="#2a56b8" /><path d="M0 6l4 2-3 3z" fill="#2a56b8" /><circle cx="4.500" cy="12.500" r="2.500" fill="#f2a522" /></svg>
                <Down color="#777" w={6} />
              </EngineButton>
              <FieldInput aria-label="Web search" placeholder="Google" />
              <svg width="13" height="13" viewBox="0 0 13 13"><circle cx="8" cy="5" r="3.700" fill="none" stroke="#3a62b4" strokeWidth="1.600" /><path d="M5.500 7.500L1 12" stroke="#3a62b4" strokeWidth="2" /></svg>
            </Field>
          </NavBar>
          <BookmarkBar>
            {bookmarks.map(([name, icon], i) => (
              <Bookmark href="#" key={i}>{icon}{name}</Bookmark>
            ))}
          </BookmarkBar>
          <TabStrip>
            <BrowserTab active icon={<Globe />} label="KW Advantage Team Intranet" />
            <BrowserTab icon={<PageIcon />} label="Paperless Office" />
            <BrowserTab
              icon={<svg width="15" height="15" viewBox="0 0 15 15"><path d="M13 5a6 6 0 1 0-1 7" fill="none" stroke="#9a9fae" strokeWidth="1.800" /><path d="M3 7h12" stroke="#7c8498" strokeWidth="2" /></svg>}
              label="Equator.com - Nationwide Foreclos..."
            />
            <BrowserTab
              icon={<svg width="15" height="15" viewBox="0 0 16 16"><path d="M0 0h16v16H0z" fill="#0c0c0c" /><path d="M8 1.500l1.800 4.300 4.700.4-3.500 3.100 1 4.700L8 11.500l-4 2.500 1-4.700-3.500-3.100 4.700-.4z" fill="#f8c21c" /></svg>}
              label="NationStar Mortgage - Short Sale S..."
            />
            <BrowserTab icon={<PageIcon />} label="KWWATERFORD1 - Web Image Mo..." />
            <TabTool aria-label="New tab">÷</TabTool>
            <TabTool $narrow aria-label="All tabs"><Down color="#888" w={6} /></TabTool>
          </TabStrip>
        </Chrome>

        <SiteHeader>
          <Identity>
            <SiteTitle>KW Advantage Team Intranet</SiteTitle>
            <UserLine>
              <span>Adam Woodhall ( <a href="#">Home</a> | <a href="#">Logout</a> )</span>
              <UserSearch />
            </UserLine>
          </Identity>
          <SiteSearch>
            <label htmlFor="site-q">Search:&nbsp;</label>
            <SelectBox $width={83}>
              <Select aria-label="Search provider" defaultValue="Google"><option>Google</option></Select>
              <Down />
            </SelectBox>
            <SearchText id="site-q" />
            <RedButton type="button" $width={33}>Go</RedButton>
          </SiteSearch>
        </SiteHeader>
        <RedBar>
          <RedBarLink href="#">KWU Training</RedBarLink>|
          <RedBarLink href="#">Administration</RedBarLink>
          <Today>Wednesday, January 05, 2011</Today>
        </RedBar>

        <Body>
          <Sidebar>
            <Collapse>
              <Side />
              <svg width="34" height="3" viewBox="0 0 34 3"><path d="M1 1.500h33" stroke="#222" strokeWidth="2" strokeDasharray="2 2" /></svg>
              <Side />
            </Collapse>
            <LogoArea>
              <Logo>
                <LogoMark>
                  <svg width="22" height="18" viewBox="0 0 22 18"><path d="M4 4c2-3 5-2 5 1s-2 7-1 11M17 2c-4 0-8 4-8 8 4-2 8-4 7-6M10 10c4 0 4 6 9 5M15 9l-2 7" fill="none" stroke="#ddb0a8" strokeWidth="1.800" /></svg>
                </LogoMark>
                <LogoName>KELLER WILLIAMS</LogoName>
                <LogoSub><span>R</span><span>E</span><span>A</span><span>L</span><span>T</span><span>Y</span></LogoSub>
              </Logo>
            </LogoArea>
            <SideList>
              {sideItems.map(([name, icon]) => (
                <SideItem key={name} $selected={name === "Documents"}>
                  <SideLink href="#">{icon}{name}</SideLink>
                  {name === "Documents" && <Down color="#d8421c" w={9} />}
                </SideItem>
              ))}
            </SideList>
            <Divider />
            <SideHeading>
              <SideLink href="#"><CalIcon />Calendar</SideLink>
              <MinusBox aria-label="Collapse calendar" />
              <Pointer>
                <svg width="12" height="19" viewBox="0 0 12 19"><path d="M5 12h7l-3.500 5z" fill="#b3242c" /><path d="M1 1v14l3.200-3 2.300 5.500 2.200-1-2.300-5H11z" fill="#fff" stroke="#222" /></svg>
              </Pointer>
            </SideHeading>
            <Month>
              <button aria-label="Previous month"><Side color="#d8920c" w={6} h={10} /></button>
              January 2011
              <button aria-label="Next month"><Side color="#d8920c" flip w={6} h={10} /></button>
            </Month>
            <CalendarTable>
              <thead>
                <tr>{["Su", "Mo", "Tu", "We", "Th", "Fr", "Sa"].map((d) => <th key={d}>{d}</th>)}</tr>
              </thead>
              <tbody>
                {weeks.map((week, w) => (
                  <tr key={w}>
                    {week.map((day, d) => (
                      <Day key={d} $light={lightDays.has(`${w}-${d}`)} $muted={isMuted(w, d)} $today={w === 1 && d === 3}>{day}</Day>
                    ))}
                  </tr>
                ))}
              </tbody>
            </CalendarTable>
            <SideHeading>
              <SideLink href="#"><People />Members</SideLink>
              <Down color="#d0242c" w={9} />
            </SideHeading>
            <Divider />
            <SideHeading><SideLink href="#"><Plus />Arranging Pixels</SideLink></SideHeading>
            <SideHeading><SideLink href="#"><Person />Preferred Vendors</SideLink></SideHeading>
          </Sidebar>
          <Scrollbar size={75} />

          <Main>
            <Toolbar>
              <ToolButton $width={65}><Plus />New<Down color="#e0242c" w={8} /></ToolButton>
              <ToolButton $width={83}><EditIcon />Edit Folder</ToolButton>
              <ToolButton $width={78}><MailIcon />Send Link</ToolButton>
              <ToolButton $width={78}><SaveLinkIcon />Save Link</ToolButton>
              <ToolButton $width={71}><RefreshIcon />Refresh</ToolButton>
              <HelpButton aria-label="Help"><Help size={21} /></HelpButton>
            </Toolbar>
            <Content>
              <PageTitle><Docs size={21} />Group Documents <span>(IT Documents)</span></PageTitle>
              <Intro>
                Exchange files of all types in the Document Manager. Upload, edit, and manage these files directly from Windows Explorer when you set up a Web Folder for your web office.
                <Help size={13} />
              </Intro>
              <DocSearch>
                <label htmlFor="doc-q">Search:</label>
                <SearchText id="doc-q" $bordered />
                <RedButton type="button" $width={34} $tall>Go</RedButton>
                <a href="#">Advanced Search</a>
              </DocSearch>
              <TabRow>
                <DocTab href="#" $width={99}><Folders />All Folders</DocTab>
                <DocTab href="#" $width={149} $active><Docs />Group Documents</DocTab>
                <DocTab href="#" $width={153}><Docs person />Personal Documents</DocTab>
                <Count>6 documents</Count>
              </TabRow>
              <Panel>
                <Crumbs><Docs size={13} /><a href="#">Group Documents</a>/<span>IT Documents</span></Crumbs>
                <SortBar>
                  <SortLabel htmlFor="sort">Sort By:</SortLabel>
                  <SelectBox $width={60}>
                    <Select id="sort" defaultValue="Title"><option>Title</option></Select>
                    <Down />
                  </SelectBox>
                  <FolderOption>
                    <Check id="folders" type="checkbox" defaultChecked />
                    <label htmlFor="folders">Show folders</label>
                  </FolderOption>
                  <RedButton $width={55} $tall>Delete</RedButton>
                  <RedButton $width={50} $tall>Move</RedButton>
                </SortBar>
                <DocTable>
                  <colgroup>
                    <col width="27" /><col width="25" /><col width="227" /><col /><col width="90" /><col width="137" /><col width="182" /><col width="13" />
                  </colgroup>
                  <thead>
                    <tr>
                      <th><Check type="checkbox" aria-label="Select all" /></th><th /><th>Title</th><th>File</th><th>Size</th><th>Posted By</th><th>Modified</th><th />
                    </tr>
                  </thead>
                  <tbody>
                    {documents.map(([title, file, size, by, modified]) => (
                      <tr key={title}>
                        <td><Check type="checkbox" aria-label={`Select ${title}`} /></td>
                        <td><Preview /></td>
                        <td><a href="#">{title}</a></td>
                        <td>{file ? <FileCell><Exe /><a href="#">{file}</a></FileCell> : "- no file -"}</td>
                        <td>{size}</td>
                        <td>{by}</td>
                        <td>{modified}</td>
                        <td />
                      </tr>
                    ))}
                  </tbody>
                </DocTable>
              </Panel>
              <CountBelow>6 documents</CountBelow>
            </Content>
          </Main>
          <Scrollbar size={90} />
        </Body>
        <StatusBar>Done</StatusBar>
      </BrowserWindow>

      <Taskbar>
        <StartButton aria-label="Start"><WinOrb /></StartButton>
        <TaskButton aria-label="Windows Explorer"><Explorer /></TaskButton>
        <TaskButton $active aria-label="Firefox"><Firefox size={31} /></TaskButton>
        <TaskButton aria-label="Internet Explorer"><IE /></TaskButton>
        <TaskButton aria-label="Notepad"><NotePad /></TaskButton>
        <TaskButton aria-label="Notes"><GreenNote /></TaskButton>
        <TaskButton aria-label="Control Panel"><ControlPanel /></TaskButton>
        <TaskButton aria-label="Recorder"><Camcorder /></TaskButton>
        <Tray>
          <Side color="#fff" h={7} />
          <svg width="16" height="14" viewBox="0 0 16 14"><path d="M1 5h3l4-4v12L4 9H1z" fill="#f4f4f4" /><circle cx="11" cy="9" r="4" fill="#d8232c" /><path d="M8.500 6.500l5 5" stroke="#fff" strokeWidth="1.200" /></svg>
        </Tray>
        <Clock>1:22 PM<br />1/6/2011</Clock>
        <ShowDesktop aria-label="Show desktop" />
      </Taskbar>
    </Desktop>
  );
}
